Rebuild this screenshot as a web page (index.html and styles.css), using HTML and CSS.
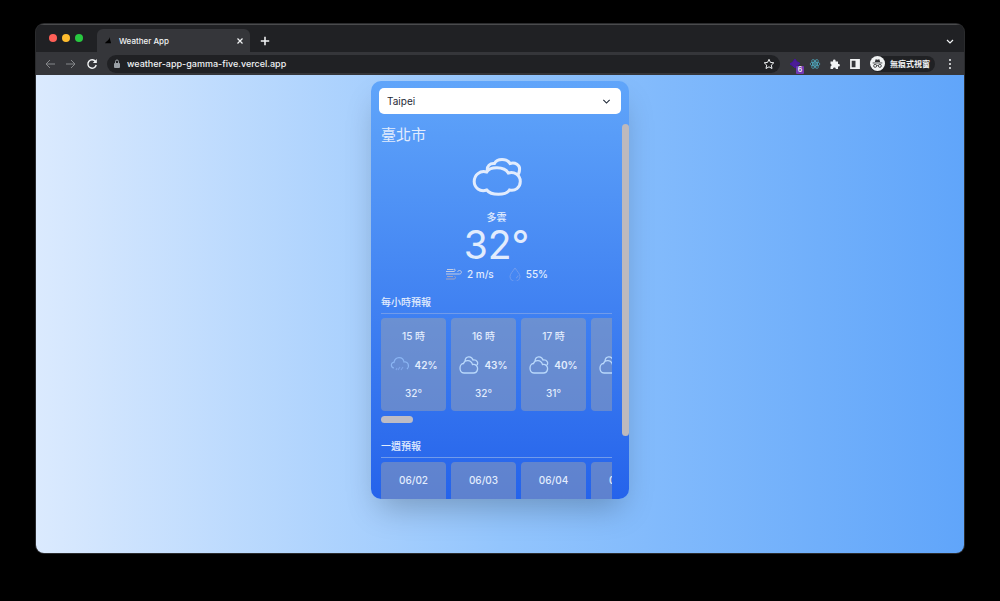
FILE: index.html
```html
<!DOCTYPE html>
<html lang="zh-Hant">
<head>
<meta charset="utf-8">
<title>Weather App</title>
<link rel="stylesheet" href="styles.css">
</head>
<body>
<svg class="defs" aria-hidden="true">
  <symbol id="clouds" viewBox="0 0 52 42">
    <path d="M15.7 17C19 11.5 33 11 37.3 18C43 16 49.3 20 49.3 26.500C49.300 32.500 44 36.500 38.500 35C35 40.700 20 40.700 15.700 35C9 37.500 3.200 32.500 3.200 26.500C3.200 20 9 15 15.700 17Z M16.500 16C15.500 11 19 8 23.500 8.500C26 3 36 3 39 8.500C44 6.800 49.300 10 48.500 15C48.500 18 47.500 19.500 45.500 20.500"/>
  </symbol>
  <symbol id="clouds-small" viewBox="0 0 20 20">
    <path d="M5 18C2 18 1 15.500 1 13C1 10 3 8.500 4.500 8.500C6 4.500 12 4.500 13.500 9.500C17 9 19 11.500 18.500 14.500C18 17 16.500 18 14.500 18Z M6 6C6.500 1 12.500 .5 14 5C18 4.500 20 8 17.500 10.500"/>
  </symbol>
</svg>
<div class="browser">
  <header class="tabs">
    <div class="lights"><i class="red"></i><i class="yellow"></i><i class="green"></i></div>
    <div class="tab">
      <svg class="favicon" viewBox="0 0 8 8"><path d="M0 7C1 5 5 4 5 0L7 7Z"/></svg>
      <span class="tab-title">Weather App</span>
      <button class="icon-button" aria-label="Close tab"><svg class="close" viewBox="0 0 8 8"><path d="M1.5 1.5L6.5 6.5M6.5 1.5L1.5 6.5"/></svg></button>
    </div>
    <button class="icon-button" aria-label="New tab"><svg class="plus" viewBox="0 0 10 10"><path d="M5 1.500V8.500M1.500 5H8.500"/></svg></button>
    <button class="icon-button tab-search" aria-label="Search tabs"><svg class="close" viewBox="0 0 8 8"><path d="M1 3L4 6L7 3"/></svg></button>
  </header>
  <nav class="toolbar">
    <button class="icon-button dim" aria-label="Back"><svg class="nav-icon" viewBox="0 0 12 12"><path d="M11 6H2M6 2L2 6L6 10"/></svg></button>
    <button class="icon-button dim" aria-label="Forward"><svg class="nav-icon" viewBox="0 0 12 12"><path d="M1 6H10M6 2L10 6L6 10"/></svg></button>
    <button class="icon-button" aria-label="Reload"><svg class="nav-icon reload" viewBox="0 0 12 12"><path d="M9.5 3.5A4.2 4.2 0 1 0 10.2 7"/><path class="solid" d="M10.8 1V5H6.8Z"/></svg></button>
    <div class="address">
      <svg class="lock" viewBox="0 0 8 10"><rect x="1" y="4" width="6" height="5" rx="1"/><path d="M2.5 4V2.5A1.5 1.5 0 0 1 5.5 2.5V4"/></svg>
      <input class="url" aria-label="Address" value="weather-app-gamma-five.vercel.app">
      <button class="icon-button" aria-label="Bookmark"><svg class="star" viewBox="0 0 12 12"><path d="M6 1.3L7.4 4.4L10.8 4.8L8.3 7.1L9 10.5L6 8.8L3 10.5L3.7 7.1L1.2 4.8L4.6 4.4Z"/></svg></button>
    </div>
    <div class="extensions">
      <button class="icon-button extension" aria-label="Extension, 6"><svg viewBox="0 0 12 12"><path class="cube" d="M6 1L7.500 3.500L11 5.500L8 7.500L6 10L4 8L1 6L4 4Z"/></svg><span class="badge">6</span></button>
      <button class="icon-button react" aria-label="React tools"><svg viewBox="0 0 12 12"><circle cx="6" cy="6" r="1"/><ellipse cx="6" cy="6" rx="5" ry="2"/><ellipse cx="6" cy="6" rx="5" ry="2" transform="rotate(60 6 6)"/><ellipse cx="6" cy="6" rx="5" ry="2" transform="rotate(120 6 6)"/></svg></button>
      <button class="icon-button" aria-label="Extensions"><svg viewBox="0 0 12 12"><path class="solid" d="M1.5 3.5H4V2.8A1.3 1.3 0 0 1 6.6 2.8V3.5H9V6H9.6A1.3 1.3 0 0 1 9.6 8.6H9V11H6.8A1.4 1.4 0 0 0 4 11H1.5V8.5A1.4 1.4 0 0 0 1.5 5.8Z"/></svg></button>
      <button class="icon-button" aria-label="Side panel"><svg class="panel" viewBox="0 0 12 12"><path d="M1.9 1.9H10.1V10.1H1.9Z"/><path class="solid" d="M6.5 2H10V10H6.5Z"/></svg></button>
    </div>
    <button class="profile"><svg class="avatar" viewBox="0 0 14 14"><circle cx="7" cy="7" r="7"/><path d="M4.5 5.5L5.3 3L7 3.4L8.7 3L9.5 5.5Z"/><path class="line" d="M2.5 6.5H11.5M6.2 9Q7 8.5 7.8 9"/><circle class="line" cx="4.8" cy="9.2" r="1.4"/><circle class="line" cx="9.2" cy="9.2" r="1.4"/></svg>無痕式視窗</button>
    <button class="icon-button" aria-label="Menu"><svg class="dots" viewBox="0 0 4 12"><circle cx="2" cy="2" r="1"/><circle cx="2" cy="6" r="1"/><circle cx="2" cy="10" r="1"/></svg></button>
  </nav>
  <main class="page">
    <section class="card">
      <div class="picker">
        <select class="city" aria-label="City"><option>Taipei</option></select>
        <svg class="chevron" viewBox="0 0 8 8"><path d="M1.2 2.6L4 5.4L6.8 2.6"/></svg>
      </div>
      <div class="body">
        <div class="content">
          <h1>臺北市</h1>
          <div class="current">
            <svg class="cloud-icon"><use href="#clouds"/></svg>
            <p class="condition">多雲</p>
            <p class="temperature">32°</p>
            <div class="details">
              <span class="detail"><svg class="wind" viewBox="0 0 18 14"><path d="M2 2.500H8.500M1 4.500H9C10.500 4.500 10.500 2 9 2M1 7H14.500C17 7 17 3.500 14.500 3.500C13 3.500 12.500 4.500 13 5"/><path class="gust" d="M2 9.500H8M1 12H9C11 12 11 9.500 9.500 9.500"/></svg>2 m/s</span>
              <span class="detail"><svg class="drop" viewBox="0 0 14 14"><path d="M7 1C5 4 2 7 2 9.5A4 4 0 0 0 12 9.5C12 7 9 4 7 1ZM8 11Q10 10.5 10 8.5"/></svg>55%</span>
            </div>
          </div>
          <h2>每小時預報</h2>
          <div class="row">
            <article class="tile"><p>15 時</p><div class="chance"><svg class="rain" viewBox="0 0 20 20"><path d="M4 13C0 12 1 7 4 7.500C5 1 13 1 14 7C18 6 20 11 17 14"/><path class="drops" d="M7 13L6 15M10 12L8 15M13 12L11 15"/></svg>42%</div><p>32°</p></article>
            <article class="tile"><p>16 時</p><div class="chance"><svg><use href="#clouds-small"/></svg>43%</div><p>32°</p></article>
            <article class="tile"><p>17 時</p><div class="chance"><svg><use href="#clouds-small"/></svg>40%</div><p>31°</p></article>
            <article class="tile"><p>18 時</p><div class="chance"><svg><use href="#clouds-small"/></svg>40%</div><p>31°</p></article>
          </div>
          <div class="row-thumb"></div>
          <h2>一週預報</h2>
          <div class="row">
            <article class="tile"><p>06/02</p><div class="chance"></div></article>
            <article class="tile"><p>06/03</p><div class="chance"></div></article>
            <article class="tile"><p>06/04</p><div class="chance"></div></article>
            <article class="tile"><p>06/05</p><div class="chance"></div></article>
          </div>
        </div>
        <div class="track"><div class="thumb"></div></div>
      </div>
    </section>
  </main>
</div>
</body>
</html>
```
FILE: styles.css
```css
* { box-sizing: border-box; margin: 0; }
body {
  height: 100vh;
  padding: 24px 36px 48px;
  background: #000;
  font-family: Inter, "Noto Sans CJK TC", sans-serif;
  font-size: 10px;
  line-height: 16px;
}
svg { display: block; fill: none; stroke: currentColor; flex: none; }
button, input, select { font: inherit; color: inherit; border: 0; background: none; padding: 0; }
.defs { position: absolute; width: 0; height: 0; }
.solid { fill: currentColor; stroke: none; }

.browser {
  height: 100%;
  display: flex;
  flex-direction: column;
  border-radius: 8px;
  overflow: hidden;
  background: #202124;
  color: #f1f3f4;
  box-shadow: 0 0 0 1px #2a2b2d;
}
.tabs { flex: none; height: 28px; display: flex; align-items: flex-end; padding: 0 8px 0 13px; box-shadow: inset 0 1px #4a4b4d; }
.lights { display: flex; gap: 5px; align-self: center; margin-right: 14px; }
.lights i { width: 8px; height: 8px; border-radius: 50%; }
.red { background: #fe5f57; }
.yellow { background: #febc2e; }
.green { background: #28c840; }
.tab {
  width: 153px; height: 23px;
  display: flex; align-items: center; gap: 7px;
  padding: 0 6px 0 8px; margin-right: 9px;
  background: #35363a;
  border-radius: 6px 6px 0 0;
}
.favicon { width: 7px; height: 7px; fill: #000; stroke: none; }
.tab-title { flex: 1; font-size: 8px; font-weight: 500; }
.icon-button { display: flex; align-items: center; justify-content: center; flex: none; }
.tabs > .icon-button { height: 23px; }
.close { width: 8px; height: 8px; stroke-width: 1.2; }
.plus { width: 12px; height: 12px; stroke-width: 1.3; }
.tabs .tab-search { margin-left: auto; margin-right: 2px; }
.toolbar { flex: none; height: 23px; display: flex; align-items: center; gap: 9px; padding: 0 12px 0 8px; background: #35363a; }
.dim { color: #85878a; }
.nav-icon { width: 12px; height: 12px; }
.reload { stroke-width: 1.4; }
.address { flex: 1; display: flex; align-items: center; gap: 6px; height: 18px; padding: 0 5px 0 6px; border-radius: 9px; background: #202124; }
.lock { width: 8px; height: 10px; color: #9aa0a6; }
.lock rect { fill: currentColor; stroke: none; }
.url { flex: 1; min-width: 0; font-size: 9px; font-weight: 500; outline: 0; }
.star { width: 12px; height: 12px; }
.extensions { display: flex; gap: 8px; }
.extensions svg { width: 12px; height: 12px; }
.extensions .panel { stroke-width: 1.6; }
.extension { position: relative; }
.cube { fill: #4c1d95; stroke: #4612a5; }
.badge { position: absolute; right: -3px; bottom: -4px; width: 8px; height: 8px; border-radius: 1px; background: #7239b3; font-size: 7px; line-height: 8px; font-weight: 600; }
.react { color: #4fa8bd; }
.react svg { stroke-width: 0.8; }
.profile { display: flex; align-items: center; gap: 5px; height: 16px; margin-right: 4px; padding-right: 5px; border-radius: 8px; background: #202124; font-size: 8px; font-weight: 600; }
.avatar { width: 15px; height: 15px; fill: #303134; stroke: none; }
.avatar > circle:first-child { fill: #f1f3f4; }
.avatar .line { fill: none; stroke: #303134; stroke-width: 0.8; }
.dots { width: 4px; height: 12px; fill: currentColor; stroke: none; }

.page {
  flex: 1;
  min-height: 0;
  display: flex;
  justify-content: center;
  padding: 6px 0 54px;
  background: linear-gradient(to right, #dbeafe, #93c5fd, #60a5fa);
}
.card {
  width: 258px;
  display: flex;
  flex-direction: column;
  border-radius: 10px;
  overflow: hidden;
  padding-top: 7px;
  background: linear-gradient(to bottom, #60a5fa, #2563eb);
  box-shadow: 0 16px 32px -8px rgb(0 0 0 / 25%);
  color: #e2ecfd;
}
.picker { position: relative; margin: 0 8px 10px; color: #1f2937; }
.city { display: block; width: 100%; height: 26px; padding: 0 8px; border-radius: 5px; background: #fff; appearance: none; }
.chevron { position: absolute; right: 10px; top: 9px; width: 9px; height: 9px; pointer-events: none; }
.body { flex: 1; min-height: 0; display: flex; justify-content: space-between; }
.content { flex: 1; min-width: 0; padding-left: 10px; margin-right: 10px; overflow: hidden; }
.track { width: 7px; }
.thumb { height: 312px; border-radius: 4px; background: #bdb9bd; }
h1 { font-size: 15px; line-height: 22px; font-weight: 400; }
.current { display: flex; flex-direction: column; align-items: center; padding-top: 9px; }
.cloud-icon { width: 52px; height: 42px; stroke-width: 3; }
.condition { margin-top: 12px; line-height: 16px; font-weight: 500; }
.temperature { font-size: 39px; line-height: 40px; }
.details { display: flex; gap: 14px; font-weight: 500; line-height: 18px; }
.detail { display: flex; align-items: center; gap: 4px; }
.wind { width: 18px; height: 14px; color: #c2cce4; }
.gust { stroke: #a6a5c0; }
.drop { width: 14px; height: 14px; color: #709cee; }
h2 { font-size: 10px; line-height: 21px; font-weight: 500; margin-top: 9px; border-bottom: 1px solid #719bea; }
.row { display: flex; gap: 5px; margin-top: 4px; overflow: hidden; }
.tile { flex: none; width: 65px; padding: 10px 0; border-radius: 4px; background: rgb(156 163 175 / 48%); text-align: center; font-weight: 500; }
.chance { display: flex; align-items: center; justify-content: center; gap: 5px; height: 41px; font-weight: 600; }
.chance svg { width: 20px; height: 20px; color: #b9d8fb; stroke-width: 1.3; }
.chance .rain { color: #8ab4f3; stroke-width: 1.2; }
.drops { stroke: #7ea4ea; }
.row-thumb { width: 32px; height: 7px; margin-top: 5px; border-radius: 4px; background: #bdbcc5; }
.row-thumb + h2 { margin-top: 13px; }
```
